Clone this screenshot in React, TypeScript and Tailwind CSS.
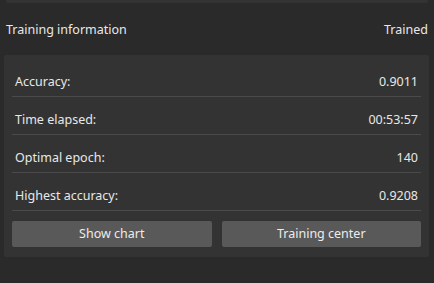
const rows = [
  { label: "Accuracy:", value: "0.9011" },
  { label: "Time elapsed:", value: "00:53:57" },
  { label: "Optimal epoch:", value: "140" },
  { label: "Highest accuracy:", value: "0.9208" },
];

export default function App() {
  return (
    <div
      className="h-[283px] w-[434px] overflow-hidden bg-[#2a2a2a] text-[12.5px] text-[#e8e8e8]"
      style={{ fontFamily: '"Microsoft YaHei", "Noto Sans", "Open Sans", sans-serif' }}
    >
      {/* tail of the panel above */}
      <div className="mx-[6px] h-[3px] rounded-b-[2px] bg-[#333333]" />

      <div className="flex h-[52px] items-center justify-between px-[6px] pt-[2px]">
        <span>Training information</span>
        <span>Trained</span>
      </div>

      <div className="mx-[4px] w-[425px] rounded-[2px] bg-[#333333] px-[8px] pt-[4px] pb-[10px]">
        {rows.map((r) => (
          <div key={r.label} className="flex h-[38px] items-end justify-between border-b border-[#4a4a4a] px-[3px] pb-[5px] leading-[18px]">
            <span>{r.label}</span>
            <span>{r.value}</span>
          </div>
        ))}
        <div className="mt-[10px] flex gap-[10px]">
          <button className="h-[26px] flex-1 rounded-[2px] bg-[#595959] text-[#ececec]">Show chart</button>
          <button className="h-[26px] flex-1 rounded-[2px] bg-[#595959] text-[#ececec]">Training center</button>
        </div>
      </div>
    </div>
  );
}
